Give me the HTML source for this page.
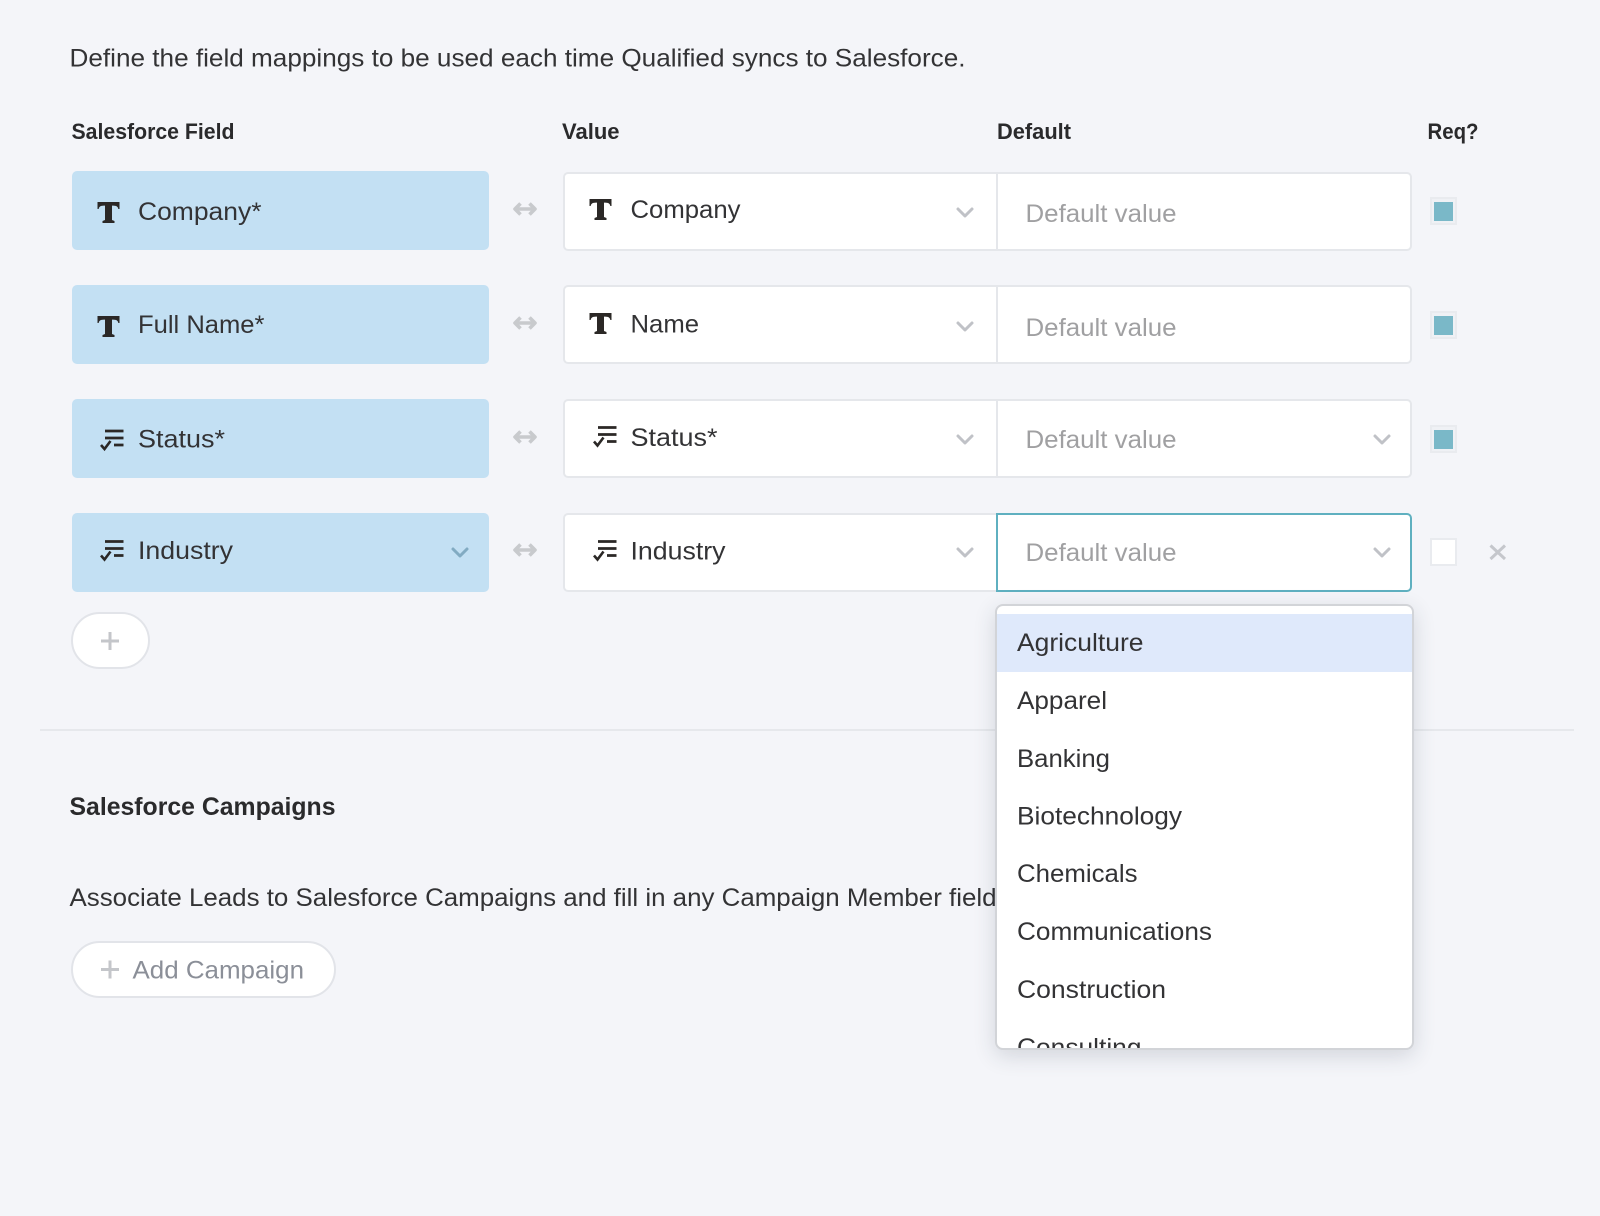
<!DOCTYPE html>
<html><head><meta charset="utf-8"><title>Field mappings</title>
<style>
html,body{margin:0;padding:0;background:#f4f5f9}
#p{position:relative;width:1600px;height:1216px;overflow:hidden;background:#f4f5f9;font-family:"Liberation Sans",sans-serif}
#p>div{position:absolute;box-sizing:border-box}
.l{left:72px;width:417px;height:79px;background:#c3e0f3;border-radius:5px}
.v{left:563px;width:434px;height:79px;background:#fff;border:2px solid #e5e7eb;border-right:0;border-radius:5px 0 0 5px}
.d{left:996px;width:416px;height:79px;background:#fff;border:2px solid #e5e7eb;border-radius:0 5px 5px 0}
.c{left:1430px;width:27px;height:28px;background:#eff1f5;border:2px solid #e9ebef}
.c i{position:absolute;left:2px;top:2.5px;width:19px;height:19px;background:#7ab8c8}
.b{background:#fff;border:2px solid #e2e4e9;border-radius:30px}
svg{position:absolute;left:0;top:0;overflow:visible}
text{font-family:"Liberation Sans",sans-serif;font-size:25px;fill:#333335}
.h{font-size:22px;font-weight:bold;fill:#2a2a2c}
.g{fill:#a0a0a2}
.ch{fill:none;stroke:#c0c2c7;stroke-width:3;stroke-linecap:round;stroke-linejoin:round}
.ar{fill:none;stroke:#c8cacd;stroke-width:3.6;stroke-linejoin:round}
#dd{left:995px;top:604px;width:419px;height:446px;background:#fff;border:2px solid #d2d4d8;border-radius:8px;box-shadow:0 6px 22px rgba(40,50,70,.16);overflow:hidden}
#dd b{position:absolute;left:-2px;right:-2px;top:8px;height:58px;background:#dfe9fb}
</style></head><body>
<div id="p">
<div class="l" style="top:171px"></div><div class="l" style="top:285px"></div><div class="l" style="top:399px"></div><div class="l" style="top:513px"></div>
<div class="v" style="top:172px"></div><div class="v" style="top:285px"></div><div class="v" style="top:399px"></div><div class="v" style="top:513px"></div>
<div class="d" style="top:172px"></div><div class="d" style="top:285px"></div><div class="d" style="top:399px"></div><div class="d" style="top:513px;border-color:#5fb0c0;border-radius:0 5px 5px 0"></div>
<div class="c" style="top:197px"><i></i></div><div class="c" style="top:311px"><i></i></div><div class="c" style="top:425px"><i></i></div><div class="c" style="top:538px;background:#fff"></div>
<div class="b" style="left:71px;top:612px;width:79px;height:57px"></div>
<div class="b" style="left:71px;top:941px;width:265px;height:57px"></div>
<div style="left:40px;top:729px;width:1534px;height:2px;background:#e6e8ec"></div>
<svg width="1600" height="1216" viewBox="0 0 1600 1216">
<defs>
<g id="T"><path fill="#2b2826" d="M.5 0H22.5V7H21.3C21 5 20 3.6 16 3.6H15V18L17.5 19V21H5.5V19L8 18V3.6H7C3 3.6 2 5 1.7 7H.5Z"/></g>
<g id="L" fill="none" stroke="#2b2826" stroke-width="2.8"><path d="M5 1.5H23.5M5 8.5H23.5M14 15.5H23.5"/><path stroke-width="2.6" d="M1 15.5L4.5 19.5L10.5 11.5"/></g>
<polyline id="C" class="ch" points="1,1 8,8 15,1"/>
<polyline id="CB" fill="none" stroke="#82abc2" stroke-width="3" stroke-linecap="round" stroke-linejoin="round" points="1,1 8,8 15,1"/>
<g id="A" class="ar"><path d="M3 8H23M8.5 2.5L3 8L8.5 13.5M17.5 2.5L23 8L17.5 13.5"/></g>
</defs>
<text x="69.5" y="66.5" textLength="896" lengthAdjust="spacingAndGlyphs">Define the field mappings to be used each time Qualified syncs to Salesforce.</text>
<text class="h" x="71.5" y="139" textLength="163" lengthAdjust="spacingAndGlyphs">Salesforce Field</text>
<text class="h" x="562" y="139" textLength="57.5" lengthAdjust="spacingAndGlyphs">Value</text>
<text class="h" x="997" y="139" textLength="74" lengthAdjust="spacingAndGlyphs">Default</text>
<text class="h" x="1427.5" y="139" textLength="51" lengthAdjust="spacingAndGlyphs">Req?</text>

<use href="#T" x="97" y="202"/><use href="#T" x="97" y="316"/><use href="#L" x="100" y="429.5"/><use href="#L" x="100" y="540"/>
<text x="138" y="220" textLength="123.5" lengthAdjust="spacingAndGlyphs">Company*</text>
<text x="138" y="333" textLength="126.5" lengthAdjust="spacingAndGlyphs">Full Name*</text>
<text x="138" y="447.5" textLength="87" lengthAdjust="spacingAndGlyphs">Status*</text>
<text x="138" y="559" textLength="95" lengthAdjust="spacingAndGlyphs">Industry</text>
<use href="#CB" x="452" y="548"/>

<use href="#A" x="512" y="201"/><use href="#A" x="512" y="315"/><use href="#A" x="512" y="429"/><use href="#A" x="512" y="542"/>

<use href="#T" x="589" y="199"/><use href="#T" x="589" y="313"/><use href="#L" x="593" y="426"/><use href="#L" x="593" y="540"/>
<text x="630.5" y="218" textLength="110" lengthAdjust="spacingAndGlyphs">Company</text>
<text x="630.5" y="332.5" textLength="68.5" lengthAdjust="spacingAndGlyphs">Name</text>
<text x="630.5" y="446" textLength="87" lengthAdjust="spacingAndGlyphs">Status*</text>
<text x="630.5" y="559.5" textLength="95" lengthAdjust="spacingAndGlyphs">Industry</text>
<use href="#C" x="957" y="208"/><use href="#C" x="957" y="322"/><use href="#C" x="957" y="435"/><use href="#C" x="957" y="548"/>

<text class="g" x="1025.5" y="222" textLength="151" lengthAdjust="spacingAndGlyphs">Default value</text>
<text class="g" x="1025.5" y="336" textLength="151" lengthAdjust="spacingAndGlyphs">Default value</text>
<text class="g" x="1025.5" y="448" textLength="151" lengthAdjust="spacingAndGlyphs">Default value</text>
<text class="g" x="1025.5" y="561" textLength="151" lengthAdjust="spacingAndGlyphs">Default value</text>
<use href="#C" x="1374" y="435"/><use href="#C" x="1374" y="548"/>

<path d="M1490.5 545.5L1505 559M1505 545.5L1490.5 559" fill="none" stroke="#c5c7cc" stroke-width="3"/>
<path d="M110 632V650M101 641H119" fill="none" stroke="#c4c6ca" stroke-width="3"/>
<path d="M110 960.5V978.5M101 969.5H119" fill="none" stroke="#c4c6ca" stroke-width="3"/>

<text x="69.5" y="815" textLength="266" lengthAdjust="spacingAndGlyphs" style="font-weight:bold;fill:#2a2a2c">Salesforce Campaigns</text>
<text x="69.5" y="906" textLength="940" lengthAdjust="spacingAndGlyphs">Associate Leads to Salesforce Campaigns and fill in any Campaign Member fields</text>
<text x="132.5" y="978.5" textLength="171.5" lengthAdjust="spacingAndGlyphs" style="fill:#8b8f98">Add Campaign</text>
</svg>
<div id="dd"><b></b>
<svg width="419" height="446" viewBox="0 0 419 446" style="left:-2px;top:-2px">
<text x="22" y="47" textLength="126.5" lengthAdjust="spacingAndGlyphs">Agriculture</text>
<text x="22" y="105" textLength="90" lengthAdjust="spacingAndGlyphs">Apparel</text>
<text x="22" y="163" textLength="93" lengthAdjust="spacingAndGlyphs">Banking</text>
<text x="22" y="220.5" textLength="165" lengthAdjust="spacingAndGlyphs">Biotechnology</text>
<text x="22" y="278" textLength="120.5" lengthAdjust="spacingAndGlyphs">Chemicals</text>
<text x="22" y="336" textLength="195" lengthAdjust="spacingAndGlyphs">Communications</text>
<text x="22" y="394" textLength="149" lengthAdjust="spacingAndGlyphs">Construction</text>
<text x="22" y="452" textLength="124.5" lengthAdjust="spacingAndGlyphs">Consulting</text>
</svg></div>
</div>
</body></html>
